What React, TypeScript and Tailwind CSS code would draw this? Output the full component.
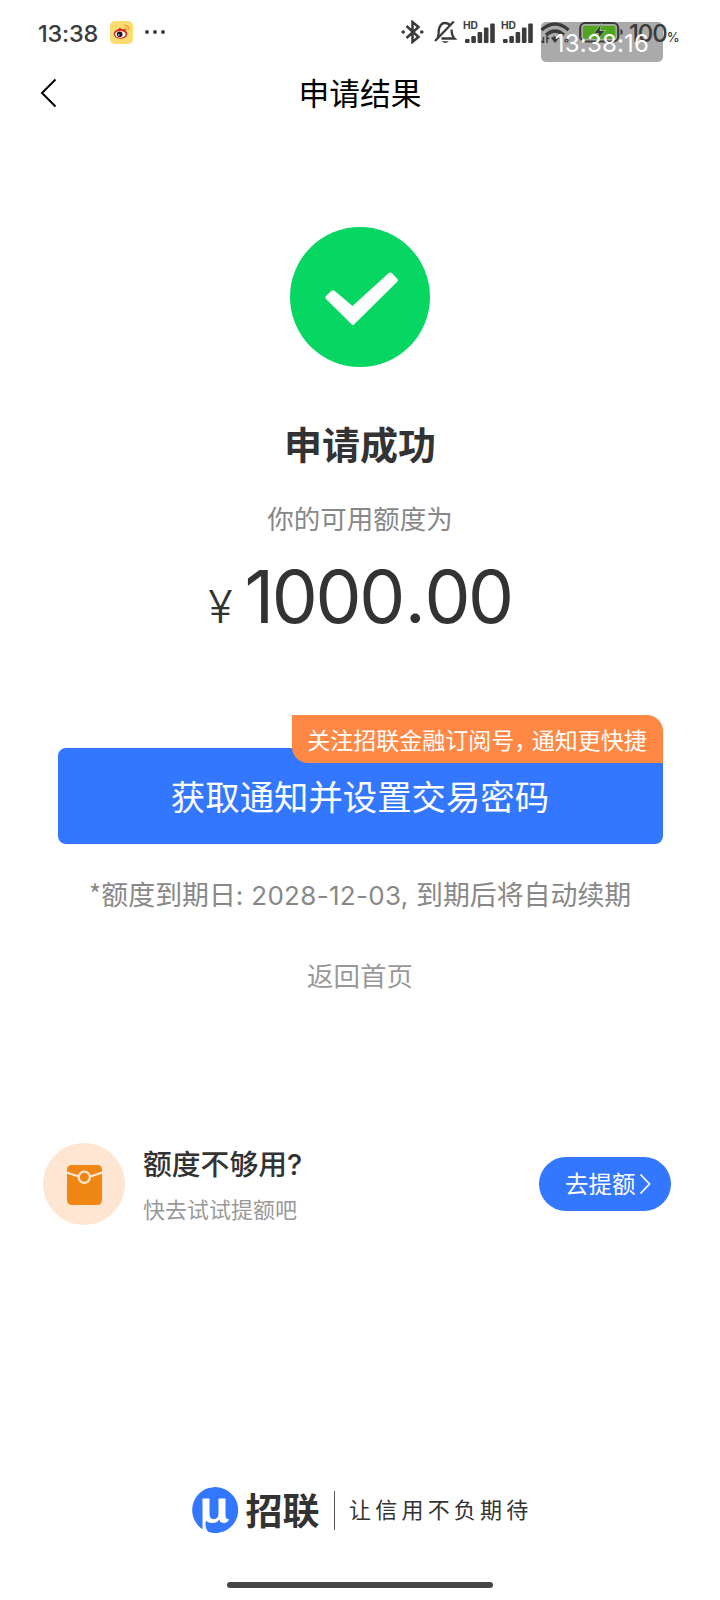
import React from 'react';

const cjk = "font-['Noto_Sans_CJK_SC',sans-serif]";
const latin = "font-[Inter,'Noto_Sans_CJK_SC',sans-serif]";

const WeiboIcon: React.FC = () => (
  <svg className="h-[23px] w-[23px]" viewBox="0 0 23 23">
    <rect width="23" height="23" rx="5" fill="#fbdc6e" />
    <ellipse cx="10.5" cy="13" rx="6.8" ry="4.8" fill="#dc2a22" />
    <path d="M6 10 L10 6.5 L12 8.5 L15.5 8 L16 11 Z" fill="#dc2a22" />
    <ellipse cx="10.3" cy="13.3" rx="5.2" ry="3.4" fill="#fff" />
    <circle cx="9.7" cy="13.2" r="2.8" fill="#16161c" />
    <circle cx="8.8" cy="14" r="0.8" fill="#fff" />
    <path d="M14.5 4.2 Q19.3 4 19 9.2 M14.8 6.7 Q17 6.6 16.7 9" fill="none" stroke="#f0952c" strokeWidth="1.1" />
  </svg>
);

const BluetoothIcon: React.FC = () => (
  <svg className="h-6 w-6" viewBox="0 0 24 24" fill="none" stroke="#3b3b3b" strokeWidth="2.5">
    <path d="M5.5 6 L17.5 17 L11.5 22 V2 L17.5 7 L5.5 18" />
    <circle cx="2.2" cy="12" r="1.8" fill="#3b3b3b" stroke="none" />
    <circle cx="20.8" cy="12" r="1.8" fill="#3b3b3b" stroke="none" />
  </svg>
);

const BellOffIcon: React.FC = () => (
  <svg className="ml-2 h-6 w-6" viewBox="0 0 24 24" fill="none" stroke="#3b3b3b" strokeWidth="2.3">
    <path d="M4.5 18 C6.5 15.5 5 11 6.3 8 C7.5 4.5 10 3 12 3 C14 3 16 4 17 5.7" />
    <path d="M18.6 9.5 C18.6 14 19.3 16.3 21.5 18.5 H8.5" />
    <path d="M2 21 L20.8 1.5" />
    <path d="M8.5 21.2 H16 Q12.3 24.6 8.5 21.2 Z" fill="#3b3b3b" stroke="none" />
  </svg>
);

const SignalIcon: React.FC<{ className?: string }> = ({ className = '' }) => (
  <svg className={`h-6 w-8 ${className}`} viewBox="0 0 32 24" fill="#3b3b3b">
    <text x="0" y="9.4" fontSize="9.8" fontWeight="700" fontFamily="Inter, sans-serif" textLength="15" lengthAdjust="spacingAndGlyphs">HD</text>
    <rect x="2" y="19" width="4.6" height="4" rx="1" />
    <rect x="8.3" y="16" width="4.6" height="7" rx="1" />
    <rect x="14.6" y="12" width="4.6" height="11" rx="1" />
    <rect x="20.9" y="7.5" width="4.6" height="15.5" rx="1" />
    <rect x="27.2" y="3.5" width="4.6" height="19.5" rx="1" />
  </svg>
);

const WifiIcon: React.FC = () => (
  <svg className="ml-[7px] h-6 w-[30px]" viewBox="0 0 30 24" fill="none" stroke="#3b3b3b" strokeWidth="3.2">
    <path d="M1.5 10 Q15 -2 28.5 10" />
    <path d="M6 15 Q15 7 24 15" />
    <path d="M11 18 Q15 14.5 19 18 L15 23 Z" fill="#3b3b3b" stroke="none" />
    <path d="M3.5 17 V23 M1.5 21 L3.5 23 M7 23 V17 L9 19" strokeWidth="1.5" />
    <circle cx="26.5" cy="20.5" r="1.5" strokeWidth="1.2" />
  </svg>
);

const BatteryIcon: React.FC = () => (
  <svg className="ml-[9px] h-6 w-[45px]" viewBox="0 0 45 24">
    <rect x="1.2" y="3" width="38" height="18.5" rx="5" fill="none" stroke="#3b3b3b" strokeWidth="2.2" />
    <rect x="4" y="5.8" width="32.4" height="13" rx="2" fill="#4fa51c" />
    <path d="M41.5 9 Q43.8 9.5 43.8 12 Q43.8 14.5 41.5 15 Z" fill="#3b3b3b" />
    <path d="M22.5 3.5 L14.5 13.5 H19.5 L17.5 21 L26.5 10.5 H21 Z" fill="#3b3b3b" stroke="#9ccf7d" strokeWidth="0.8" />
  </svg>
);

const StatusBar: React.FC = () => (
  <div className="relative flex h-16 items-center pl-[38px] text-[#3b3b3b]">
    <span className={`mt-[3px] w-[61px] text-[23.5px] leading-none font-medium tracking-[-0.2px] whitespace-nowrap ${latin}`}>13:38</span>
    <div className="ml-[11px] flex items-center">
      <WeiboIcon />
      <div className="ml-[12px] flex gap-1">
        <span className="h-1 w-1 rounded-full bg-[#3b3b3b]" />
        <span className="h-1 w-1 rounded-full bg-[#3b3b3b]" />
        <span className="h-1 w-1 rounded-full bg-[#3b3b3b]" />
      </div>
    </div>
    {/* plate of the clock stamp, under the system icons */}
    <div className="absolute top-[22px] left-[541px] h-10 w-[122px] rounded-[5px] bg-[#aaa]" />
    <div className="relative ml-auto flex items-center pr-[41px]">
      <BluetoothIcon />
      <BellOffIcon />
      <SignalIcon className="ml-[6px]" />
      <SignalIcon className="ml-[6px]" />
      <WifiIcon />
      <BatteryIcon />
      <span className={`mt-[3px] ml-[5px] flex w-[50px] items-baseline leading-none font-medium ${latin}`}>
        <span className="w-[38px] text-[24px] tracking-[-1.1px]">100</span>
        <span className="text-[13px]">%</span>
      </span>
    </div>
    <div className={`absolute top-[24px] left-[541px] flex h-10 w-[122px] items-center justify-center text-[24px] tracking-[0.2px] text-white ${latin}`}>
      13:38:16
    </div>
  </div>
);

const EnvelopeIcon: React.FC = () => (
  <div className="flex h-[82px] w-[82px] items-center justify-center rounded-full bg-[#fee6d3]">
    <svg className="mt-[2px] h-10 w-[35px]" viewBox="0 0 35 40">
      <rect width="35" height="40" rx="4.5" fill="#f08613" />
      <path d="M0 7.5 L11.5 11.5 M35 7.5 L23.5 11.5" stroke="#fee6d3" strokeWidth="2.2" />
      <circle cx="17.3" cy="12.3" r="5.6" fill="#f08613" stroke="#fee6d3" strokeWidth="2.2" />
    </svg>
  </div>
);

const BrandLogo: React.FC = () => (
  <svg className="h-[46px] w-[46px]" viewBox="0 0 46 46">
    <path d="M11 42.6 A23 23 0 1 1 16.5 45.1 C14 42.5 13.4 40 13.6 36 Z" fill="#3377ff" />
    <path
      d="M10.5 11.5 H17.5 V27 Q17.5 32.2 21.5 32.2 Q26.5 32.2 26.5 26 V11.5 H33.5 V28 Q33.5 32.5 37 32.2 Q35.5 36 32 36 Q28 36 27.3 32.5 Q25 36 20.5 36 Q16 36 14 34 Q12.5 39 11.3 43.5 H10.5 Z"
      fill="#fff"
    />
  </svg>
);

export default function App() {
  return (
    <div className={`flex h-[1600px] w-[720px] flex-col overflow-hidden bg-white text-[#333] ${cjk}`}>
      <StatusBar />

      <header className="grid h-[57px] grid-cols-[1fr_auto_1fr] items-center">
        <svg className="ml-10 h-[30px] w-[18px]" viewBox="0 0 18 30" fill="none" stroke="#000" strokeWidth="2">
          <path d="M15.5 1.5 L2 15 L15.5 28.5" />
        </svg>
        <h1 className="text-[30.8px] leading-none text-black">申请结果</h1>
      </header>

      <main className="flex flex-col items-center">
        <svg className="mt-[106px] h-[140px] w-[140px]" viewBox="0 0 140 140">
          <circle cx="70" cy="70" r="70" fill="#07d662" />
          <path
            d="M36 69 L41.5 63.8 Q43 62.5 44.5 63.8 L62.5 79 L98.5 46.3 Q100.5 44.8 102 46.3 L107.5 52 Q108.5 53.5 107 55 L64.5 97 Q63 98.8 61.3 97 L36 72 Q34.5 70.5 36 69 Z"
            fill="#fff"
          />
        </svg>
        <h2 className="mt-[57px] text-[38px] leading-[38px] font-bold">申请成功</h2>
        <p className="mt-[42px] text-[26.5px] leading-[27px] text-[#888]">你的可用额度为</p>
        <div className={`mt-[28px] flex h-[75px] items-baseline leading-[75px] ${latin}`}>
          <span className="mr-[12px] text-[45px] font-light">¥</span>
          <span className="text-[73px] tracking-[-2.4px]">
            1000<span className="mr-[1px] ml-[2px]">.</span>00
          </span>
        </div>

        <div className="relative mt-[114px] h-24 w-[605px]">
          <button className="h-24 w-full rounded-lg bg-[#3377ff] pb-px text-[34.4px] leading-none text-white">
            获取通知并设置交易密码
          </button>
          <span className="absolute -top-[33px] right-0 flex h-12 w-[371px] items-center justify-center rounded-tr-2xl rounded-bl-2xl bg-[#ff8845] text-[23px] whitespace-nowrap text-white">
            关注招联金融订阅号<span className="mr-[6px] [font-feature-settings:'halt']">，</span>通知更快捷
          </span>
        </div>

        <p className={`mt-[36px] flex items-baseline text-[26.9px] leading-[27px] text-[#888] ${cjk}`}>
          <span>*额度到期日</span>
          <span className={`text-[26px] tracking-[0.3px] whitespace-pre ${latin}`}>: 2028-12-03, </span>
          <span>到期后将自动续期</span>
        </p>
        <a className="mt-[52px] text-[26.5px] leading-[27px] text-[#999]">返回首页</a>
      </main>

      <section className="mt-[155px] flex items-center pr-[49px] pl-[43px]">
        <EnvelopeIcon />
        <div className="ml-[18px] flex flex-col">
          <span className={`text-[28.8px] leading-[29px] font-medium ${latin}`}>额度不够用?</span>
          <span className="mt-[18px] text-[22px] leading-[22px] text-[#999]">快去试试提额吧</span>
        </div>
        <button className="ml-auto flex h-[54px] w-[132px] items-center rounded-full bg-[#3377ff] pl-[26px] text-[23.5px] leading-none text-white">
          去提额
          <svg className="ml-[3px] h-[22px] w-3" viewBox="0 0 12 22" fill="none" stroke="#fff" strokeWidth="1.8">
            <path d="M1.5 1.5 L10.5 11 L1.5 20.5" />
          </svg>
        </button>
      </section>

      <footer className="mt-auto flex flex-col items-center pb-3">
        <div className="ml-[4px] flex items-center">
          <BrandLogo />
          <span className="mb-[2px] ml-[8px] text-[37px] leading-none font-bold">招联</span>
          <span className="ml-[14px] h-[39px] w-[1.5px] bg-[#555]" />
          <span className="mb-[4px] ml-[14px] text-[22px] leading-none tracking-[4.2px]">让信用不负期待</span>
        </div>
        <div className="mt-[49px] h-[6px] w-[266px] rounded-full bg-[#464646]" />
      </footer>
    </div>
  );
}
